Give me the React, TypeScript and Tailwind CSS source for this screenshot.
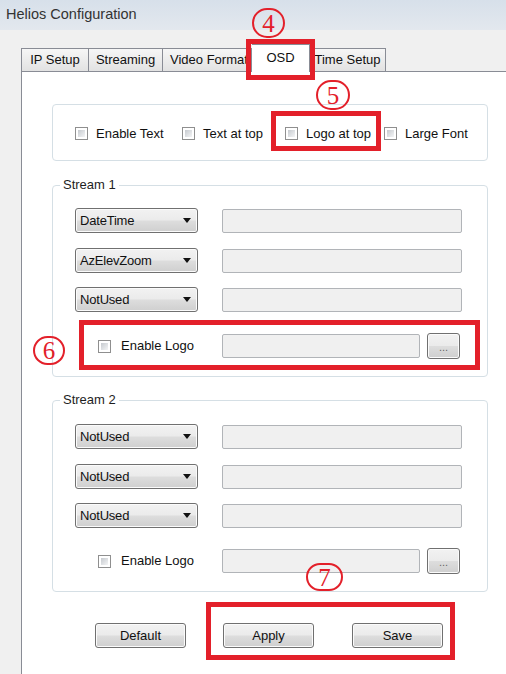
import React from 'react';

const winBtn =
  "border border-[#707070] rounded-[3px] bg-[linear-gradient(to_bottom,#f2f2f2_0%,#ebebeb_48%,#dddddd_52%,#cfcfcf_100%)] shadow-[inset_0_0_0_1px_#fbfbfb]";

function CheckBox() {
  return (
    <span className="w-[13px] h-[13px] shrink-0 border border-[#8f8f8f] bg-white p-[2px] flex">
      <span className="flex-1 bg-gradient-to-br from-[#c6cacf] to-[#f4f5f6]" />
    </span>
  );
}

function Combo({ value }: { value: string }) {
  return (
    <div className={`w-[123px] h-[25px] flex items-center justify-between pl-[4px] pr-[6px] ${winBtn}`}>
      <span className="tracking-[-0.2px] text-[#111]">{value}</span>
      <svg width="8" height="5" viewBox="0 0 8 5">
        <path d="M0 0H8L4 5Z" fill="#111" />
      </svg>
    </div>
  );
}

function Field({ w }: { w: string }) {
  return <div className={`${w} h-[24px] border border-[#b1b4b8] rounded-[2px] bg-[#f0f0f0]`} />;
}

function LogoRow({ mt }: { mt: string }) {
  return (
    <div className={`flex items-center ${mt}`}>
      <div className="w-[147px] flex items-center pl-[23px]">
        <CheckBox />
        <span className="ml-[10px] text-[#111]">Enable Logo</span>
      </div>
      <Field w="w-[198px]" />
      <div className={`ml-[7px] w-[33px] h-[26px] flex items-center justify-center text-[11px] text-[#666] pt-[3px] ${winBtn}`}>
        ...
      </div>
    </div>
  );
}

function StreamGroup({
  title,
  items,
  padTop,
  logoGap,
}: {
  title: string;
  items: string[];
  padTop: string;
  logoGap: string;
}) {
  return (
    <fieldset className="w-[436px] border border-[#d5dfe5] rounded-[4px]">
      <legend className="ml-[7px] px-[3px] leading-[16px] text-[#1e1e1e]">{title}</legend>
      <div className={`pl-[22px] pb-[17px] ${padTop}`}>
        {items.map((v, i) => (
          <div key={i} className={`flex items-center ${i === 0 ? "" : i === 1 ? "mt-[15px]" : "mt-[14px]"}`}>
            <Combo value={v} />
            <div className="ml-[24px]">
              <Field w="w-[240px]" />
            </div>
          </div>
        ))}
        <LogoRow mt={logoGap} />
      </div>
    </fieldset>
  );
}

function Tab({ label, w, first, clip }: { label: string; w: string; first?: boolean; clip?: boolean }) {
  return (
    <div
      className={`${w} h-[23px] border-t border-r ${first ? "border-l" : ""} border-[#898c95] bg-gradient-to-b from-[#f6f6f6] to-[#e2e2e2] flex items-center overflow-hidden whitespace-nowrap ${clip ? "pl-[7px]" : "justify-center"}`}
    >
      {label}
    </div>
  );
}

function Marker({ n, cls }: { n: string; cls: string }) {
  return (
    <div
      className={`absolute ${cls} rounded-full border-2 border-[#e3202a] flex items-center justify-center text-[#e3202a] text-[25px] leading-none font-['Liberation_Serif',serif]`}
    >
      {n}
    </div>
  );
}

export default function App() {
  return (
    <div className="relative w-[506px] h-[674px] overflow-hidden bg-[#f0f0f0] flex flex-col font-['Liberation_Sans',Arial,sans-serif] text-[13px] text-[#111]">
      <div className="h-[30px] shrink-0 flex items-center pl-[6px] text-[14.5px] text-[#333] bg-gradient-to-b from-[#d7e0ea] to-[#e3e8ee]">
        Helios Configuration
      </div>

      <div className="flex-1 flex flex-col pl-[21px] pt-[14px]">
        {/* tab strip */}
        <div className="h-[27px] flex items-end shrink-0">
          <Tab label="IP Setup" w="w-[68px]" first />
          <Tab label="Streaming" w="w-[74px]" />
          <Tab label="Video Format" w="w-[89px]" clip />
          <div className="relative z-10 -mb-px w-[58px] h-[28px] border-t border-r border-[#898c95] bg-white flex items-center justify-center pb-[2px]">
            OSD
          </div>
          <Tab label="Time Setup" w="w-[76px]" />
        </div>

        {/* OSD page */}
        <div className="flex-1 bg-white border-l border-t border-[#898c95] pl-[30px] pt-[32px]">
          <div className="w-[436px] h-[57px] border border-[#d5dfe5] rounded-[4px] flex items-center pl-[22px] pt-[2px]">
            {[
              ["Enable Text", "w-[107px]"],
              ["Text at top", "w-[103px]"],
              ["Logo at top", "w-[99px]"],
              ["Large Font", ""],
            ].map(([label, w]) => (
              <div key={label} className={`flex items-center ${w}`}>
                <CheckBox />
                <span className="ml-[8px] whitespace-nowrap">{label}</span>
              </div>
            ))}
          </div>

          <div className="mt-[16px]">
            <StreamGroup
              title="Stream 1"
              items={["DateTime", "AzElevZoom", "NotUsed"]}
              padTop="pt-[15px]"
              logoGap="mt-[21px]"
            />
          </div>

          <div className="mt-[15px]">
            <StreamGroup
              title="Stream 2"
              items={["NotUsed", "NotUsed", "NotUsed"]}
              padTop="pt-[16px]"
              logoGap="mt-[20px]"
            />
          </div>

          <div className="mt-[31px] pl-[43px] flex items-center">
            <div className={`w-[91px] h-[25px] flex items-center justify-center ${winBtn}`}>Default</div>
            <div className={`ml-[37px] w-[91px] h-[25px] flex items-center justify-center ${winBtn}`}>Apply</div>
            <div className={`ml-[38px] w-[91px] h-[25px] flex items-center justify-center ${winBtn}`}>Save</div>
          </div>
        </div>
      </div>

      {/* callouts */}
      <div className="pointer-events-none">
        <Marker n="4" cls="left-[252px] top-[8px] w-[33px] h-[30px]" />
        <div className="absolute left-[246px] top-[39px] w-[69px] h-[41px] border-[5px] border-[#e3202a]" />
        <Marker n="5" cls="left-[316px] top-[80px] w-[34px] h-[30px]" />
        <div className="absolute left-[271px] top-[111px] w-[110px] h-[40px] border-[5px] border-[#e3202a]" />
        <Marker n="6" cls="left-[33px] top-[336px] w-[32px] h-[29px]" />
        <div className="absolute left-[79px] top-[320px] w-[401px] h-[50px] border-[5px] border-[#e3202a]" />
        <Marker n="7" cls="left-[306px] top-[563px] w-[37px] h-[28px]" />
        <div className="absolute left-[206px] top-[602px] w-[249px] h-[58px] border-[5px] border-[#e3202a]" />
      </div>
    </div>
  );
}
